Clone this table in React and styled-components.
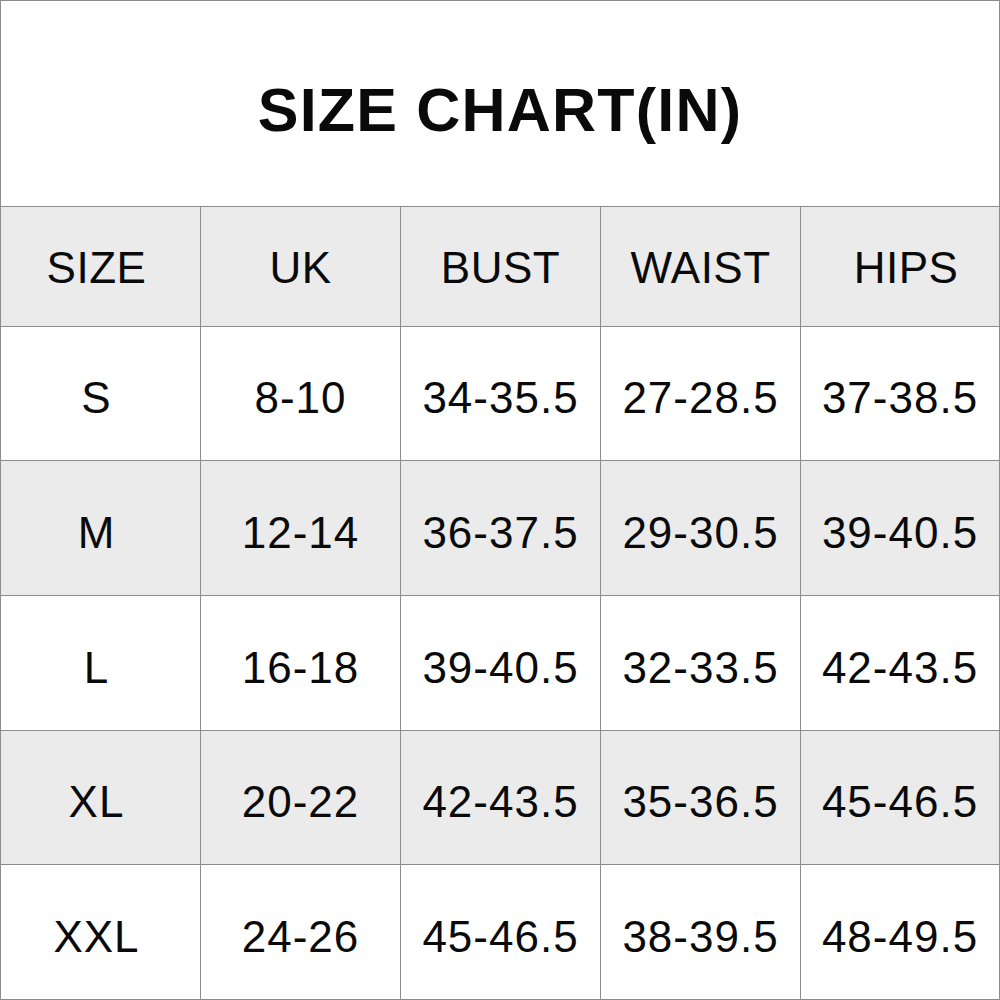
import styled, { createGlobalStyle } from 'styled-components'

const GlobalStyle = createGlobalStyle`
    html, body {
        margin: 0;
        padding: 0;
        background: #ffffff;
    }
    * {
        box-sizing: border-box;
    }
`

const Sheet = styled.div`
    width: 1000px;
    height: 1000px;
    border: 1px solid #8c8c8c;
    display: flex;
    flex-direction: column;
    font-family: "Liberation Sans", Arial, sans-serif;
    color: #0a0a0a;
`
const Title = styled.h1`
    margin: 0;
    height: 206px;
    flex: none;
    display: flex;
    align-items: center;
    justify-content: center;
    border-bottom: 1px solid #8c8c8c;
    font-size: 61px;
    font-weight: bold;
    letter-spacing: 1.2px;
    padding-top: 12px;
`
const Table = styled.div`
    flex: 1;
    display: grid;
    grid-template-columns: 200px 200px 200px 200px 1fr;
    grid-template-rows: 120px 134px 135px 135px 134px 1fr;
`
const Cell = styled.div`
    display: flex;
    align-items: center;
    justify-content: center;
    background: ${p => (p.$shaded ? '#ebebeb' : '#ffffff')};
    border-right: ${p => (p.$last ? 'none' : '1px solid #8c8c8c')};
    border-bottom: ${p => (p.$bottom ? 'none' : '1px solid #8c8c8c')};
    font-size: 44px;
    letter-spacing: ${p => (p.$head ? '0.5px' : '1px')};
    padding-top: ${p => (p.$head ? '3px' : '9px')};
    padding-right: ${p => (p.$first ? '8px' : '0')};
    padding-left: ${p => (p.$head && p.$last ? '12px' : '0')};
`

const headers = ['SIZE', 'UK', 'BUST', 'WAIST', 'HIPS']
const rows = [
    ['S', '8-10', '34-35.5', '27-28.5', '37-38.5'],
    ['M', '12-14', '36-37.5', '29-30.5', '39-40.5'],
    ['L', '16-18', '39-40.5', '32-33.5', '42-43.5'],
    ['XL', '20-22', '42-43.5', '35-36.5', '45-46.5'],
    ['XXL', '24-26', '45-46.5', '38-39.5', '48-49.5'],
]

function App() {
    return (
        <>
            <GlobalStyle />
            <Sheet>
                <Title>SIZE CHART(IN)</Title>
                <Table>
                    {headers.map((h, i) => (
                        <Cell key={h} $head $shaded $first={i === 0} $last={i === 4}>{h}</Cell>
                    ))}
                    {rows.map((row, r) =>
                        row.map((v, i) => (
                            <Cell
                                key={r + '-' + i}
                                $shaded={r % 2 === 1}
                                $first={i === 0}
                                $last={i === 4}
                                $bottom={r === rows.length - 1}
                            >
                                {v}
                            </Cell>
                        ))
                    )}
                </Table>
            </Sheet>
        </>
    )
}

export default App
